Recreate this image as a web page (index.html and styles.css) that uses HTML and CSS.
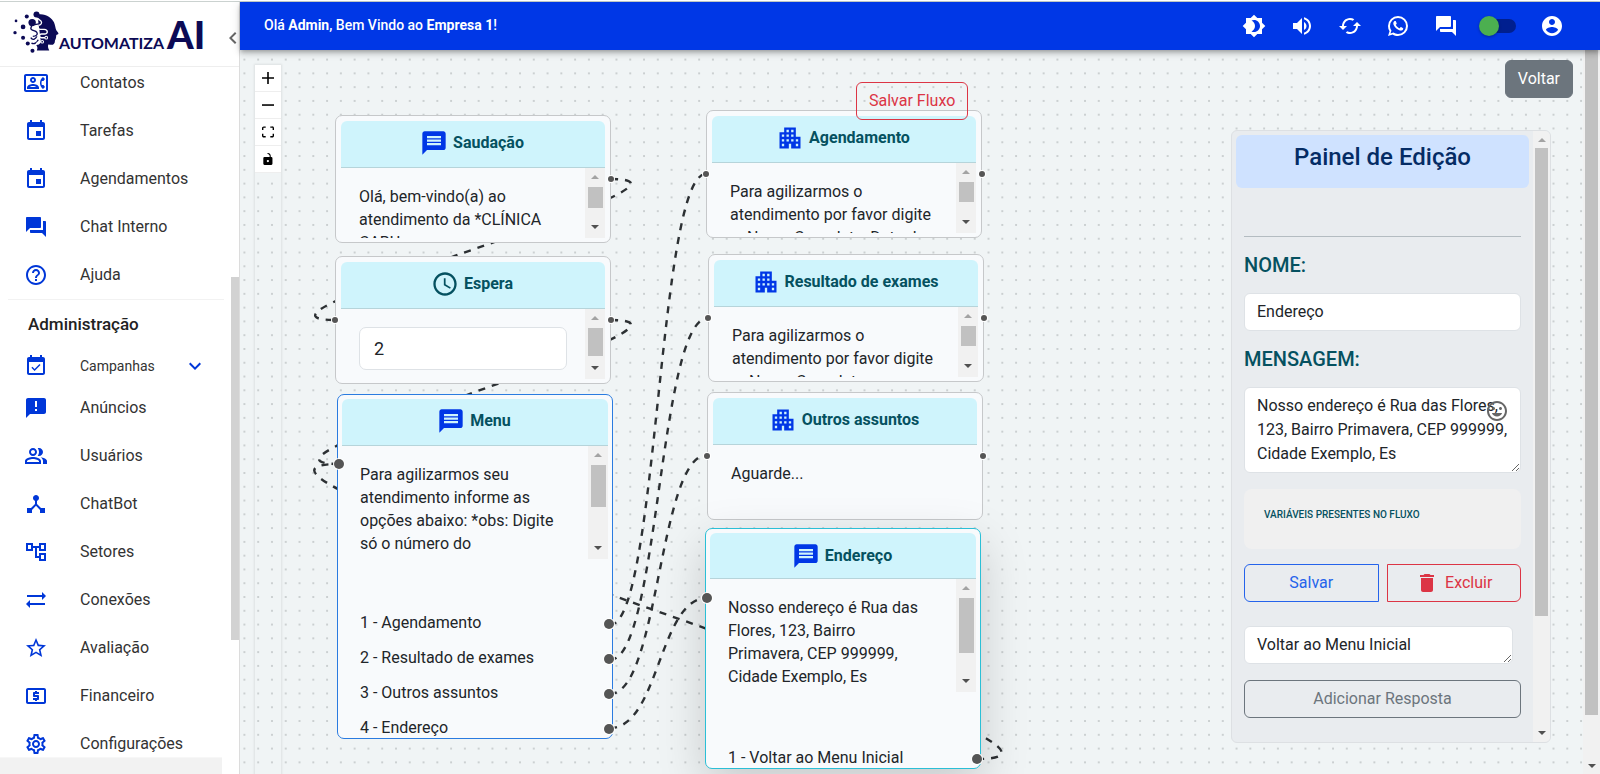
FILE: index.html
```html
<!DOCTYPE html>
<html lang="pt-BR">
<head>
<meta charset="utf-8">
<title>Automatiza AI</title>
<meta name="viewport" content="width=device-width, initial-scale=1">
<link rel="stylesheet" href="styles.css">
</head>
<body>
<svg class="sprite" aria-hidden="true">
  <symbol id="contact" viewBox="0 0 24 24"><path d="M22 3H2C.9 3 0 3.9 0 5v14c0 1.1.9 2 2 2h20c1.1 0 1.99-.9 1.99-2L24 5c0-1.1-.9-2-2-2zm0 16H2V5h20v14zm-2.99-1.01L21 16l-1.51-2h-1.64c-.22-.63-.35-1.3-.35-2s.13-1.37.35-2h1.64L21 8l-1.99-1.99c-1.31.98-2.28 2.38-2.73 3.99-.18.64-.28 1.31-.28 2s.1 1.36.28 2c.45 1.61 1.42 3.01 2.73 3.99zM9 12c1.65 0 3-1.35 3-3s-1.35-3-3-3-3 1.35-3 3 1.35 3 3 3zm0-4c.55 0 1 .45 1 1s-.45 1-1 1-1-.45-1-1 .45-1 1-1zm6 8.59c0-2.5-3.97-3.58-6-3.58s-6 1.08-6 3.58V18h12v-1.41zM5.48 16c.74-.5 2.22-1 3.52-1s2.77.49 3.52 1H5.48z"/></symbol>
  <symbol id="event" viewBox="0 0 24 24"><path d="M17 12h-5v5h5v-5zM16 1v2H8V1H6v2H5c-1.11 0-1.99.9-1.99 2L3 19c0 1.1.89 2 2 2h14c1.1 0 2-.9 2-2V5c0-1.1-.9-2-2-2h-1V1h-2zm3 18H5V8h14v11z"/></symbol>
  <symbol id="forum" viewBox="0 0 24 24"><path d="M21 6h-2v9H6v2c0 .55.45 1 1 1h11l4 4V7c0-.55-.45-1-1-1zm-4 6V3c0-.55-.45-1-1-1H3c-.55 0-1 .45-1 1v14l4-4h10c.55 0 1-.45 1-1z"/></symbol>
  <symbol id="help" viewBox="0 0 24 24"><path d="M11 18h2v-2h-2v2zm1-16C6.48 2 2 6.48 2 12s4.48 10 10 10 10-4.48 10-10S17.52 2 12 2zm0 18c-4.41 0-8-3.59-8-8s3.59-8 8-8 8 3.59 8 8-3.59 8-8 8zm0-14c-2.21 0-4 1.79-4 4h2c0-1.1.9-2 2-2s2 .9 2 2c0 2-3 1.75-3 5h2c0-2.25 3-2.5 3-5 0-2.21-1.79-4-4-4z"/></symbol>
  <symbol id="event-ok" viewBox="0 0 24 24"><path d="M16.53 11.06L15.47 10l-4.88 4.88-2.12-2.12-1.06 1.06L10.59 17l5.94-5.94zM19 3h-1V1h-2v2H8V1H6v2H5c-1.11 0-1.99.9-1.99 2L3 19c0 1.1.89 2 2 2h14c1.1 0 2-.9 2-2V5c0-1.1-.9-2-2-2zm0 16H5V8h14v11z"/></symbol>
  <symbol id="announce" viewBox="0 0 24 24"><path d="M20 2H4c-1.1 0-1.99.9-1.99 2L2 22l4-4h14c1.1 0 2-.9 2-2V4c0-1.1-.9-2-2-2zm-7 9h-2V5h2v6zm0 4h-2v-2h2v2z"/></symbol>
  <symbol id="people" viewBox="0 0 24 24"><path d="M16.67 13.13C18.04 14.06 19 15.32 19 17v3h4v-3c0-2.18-3.57-3.47-6.33-3.87zM15 12c2.21 0 4-1.79 4-4s-1.79-4-4-4c-.47 0-.91.1-1.33.24C14.5 5.27 15 6.58 15 8s-.5 2.73-1.33 3.76c.42.14.86.24 1.33.24zM9 12c2.21 0 4-1.79 4-4s-1.79-4-4-4-4 1.79-4 4 1.79 4 4 4zm0-6c1.1 0 2 .9 2 2s-.9 2-2 2-2-.9-2-2 .9-2 2-2zM9 13c-2.67 0-8 1.34-8 4v3h16v-3c0-2.66-5.33-4-8-4zm6 5H3v-.99C3.2 16.29 6.3 15 9 15s5.8 1.29 6 2v1z"/></symbol>
  <symbol id="hub" viewBox="0 0 24 24"><path d="M17 16l-4-4V8.82C14.16 8.4 15 7.3 15 6c0-1.66-1.34-3-3-3S9 4.34 9 6c0 1.3.84 2.4 2 2.82V12l-4 4H3v5h5v-3.05l4-4.2 4 4.2V21h5v-5h-4z"/></symbol>
  <symbol id="tree" viewBox="0 0 24 24"><path d="M22 11V3h-7v3H9V3H2v8h7V8h2v10h4v3h7v-8h-7v3h-2V8h2v3h7zM7 9H4V5h3v4zm10 6h3v4h-3v-4zm0-10h3v4h-3V5z"/></symbol>
  <symbol id="sync" viewBox="0 0 24 24"><path d="M22 8l-4-4v3H3v2h15v3l4-4zM2 16l4 4v-3h15v-2H6v-3l-4 4z"/></symbol>
  <symbol id="star" viewBox="0 0 24 24"><path d="M22 9.24l-7.19-.62L12 2 9.19 8.63 2 9.24l5.46 4.73L5.82 21 12 17.27 18.18 21l-1.63-7.03L22 9.24zM12 15.4l-3.76 2.27 1-4.28-3.32-2.88 4.38-.38L12 6.1l1.71 4.04 4.38.38-3.32 2.88 1 4.28L12 15.4z"/></symbol>
  <symbol id="atm" viewBox="0 0 24 24"><path d="M11 17h2v-1h1c.55 0 1-.45 1-1v-3c0-.55-.45-1-1-1h-3v-1h4V8h-2V7h-2v1h-1c-.55 0-1 .45-1 1v3c0 .55.45 1 1 1h3v1H9v2h2v1zm9-13H4c-1.11 0-1.99.89-1.99 2L2 18c0 1.11.89 2 2 2h16c1.11 0 2-.89 2-2V6c0-1.11-.89-2-2-2zm0 14H4V6h16v12z"/></symbol>
  <symbol id="settings" viewBox="0 0 24 24"><path d="M19.43 12.98c.04-.32.07-.64.07-.98 0-.34-.03-.66-.07-.98l2.11-1.65c.19-.15.24-.42.12-.64l-2-3.46c-.09-.16-.26-.25-.44-.25-.06 0-.12.01-.17.03l-2.49 1c-.52-.4-1.08-.73-1.69-.98l-.38-2.65C14.46 2.18 14.25 2 14 2h-4c-.25 0-.46.18-.49.42l-.38 2.65c-.61.25-1.17.59-1.69.98l-2.49-1c-.06-.02-.12-.03-.18-.03-.17 0-.34.09-.43.25l-2 3.46c-.13.22-.07.49.12.64l2.11 1.65c-.04.32-.07.65-.07.98 0 .33.03.66.07.98l-2.11 1.65c-.19.15-.24.42-.12.64l2 3.46c.09.16.26.25.44.25.06 0 .12-.01.17-.03l2.49-1c.52.4 1.08.73 1.69.98l.38 2.65c.03.24.24.42.49.42h4c.25 0 .46-.18.49-.42l.38-2.65c.61-.25 1.17-.59 1.69-.98l2.49 1c.06.02.12.03.18.03.17 0 .34-.09.43-.25l2-3.46c.12-.22.07-.49-.12-.64l-2.11-1.65zm-1.98-1.71c.04.31.05.52.05.73 0 .21-.02.43-.05.73l-.14 1.13.89.7 1.08.84-.7 1.21-1.27-.51-1.04-.42-.9.68c-.43.32-.84.56-1.25.73l-1.06.43-.16 1.13-.2 1.35h-1.4l-.19-1.35-.16-1.13-1.06-.43c-.43-.18-.83-.41-1.23-.71l-.91-.7-1.06.43-1.27.51-.7-1.21 1.08-.84.89-.7-.14-1.13c-.03-.31-.05-.54-.05-.74s.02-.43.05-.73l.14-1.13-.89-.7-1.08-.84.7-1.21 1.27.51 1.04.42.9-.68c.43-.32.84-.56 1.25-.73l1.06-.43.16-1.13.2-1.35h1.39l.19 1.35.16 1.13 1.06.43c.43.18.83.41 1.23.71l.91.7 1.06-.43 1.27-.51.7 1.21-1.07.85-.89.7.14 1.13zM12 8c-2.21 0-4 1.79-4 4s1.79 4 4 4 4-1.79 4-4-1.79-4-4-4zm0 6c-1.1 0-2-.9-2-2s.9-2 2-2 2 .9 2 2-.9 2-2 2z"/></symbol>
  <symbol id="bright" viewBox="0 0 24 24"><path d="M20 8.69V4h-4.69L12 .69 8.69 4H4v4.69L.69 12 4 15.31V20h4.69L12 23.31 15.31 20H20v-4.69L23.31 12 20 8.69zM12 18c-.89 0-1.74-.2-2.5-.55C11.56 16.5 13 14.42 13 12s-1.44-4.5-3.5-5.45C10.26 6.2 11.11 6 12 6c3.31 0 6 2.69 6 6s-2.69 6-6 6z"/></symbol>
  <symbol id="volume" viewBox="0 0 24 24"><path d="M3 9v6h4l5 5V4L7 9H3zm13.5 3c0-1.77-1.02-3.29-2.5-4.03v8.05c1.48-.73 2.5-2.25 2.5-4.02zM14 3.23v2.06c2.89.86 5 3.54 5 6.71s-2.11 5.85-5 6.71v2.06c4.01-.91 7-4.49 7-8.77s-2.99-7.86-7-8.77z"/></symbol>
  <symbol id="cached" viewBox="0 0 24 24"><path d="M19 8l-4 4h3c0 3.31-2.69 6-6 6-1.01 0-1.97-.25-2.8-.7l-1.46 1.46C8.97 19.54 10.43 20 12 20c4.42 0 8-3.58 8-8h3l-4-4zM6 12c0-3.31 2.69-6 6-6 1.01 0 1.97.25 2.8.7l1.46-1.46C15.03 4.46 13.57 4 12 4c-4.42 0-8 3.58-8 8H1l4 4 4-4H6z"/></symbol>
  <symbol id="whats" viewBox="0 0 24 24"><path d="M16.75 13.96c.25.13.41.2.46.3.06.11.04.61-.21 1.18-.2.56-1.24 1.1-1.7 1.12-.46.02-.47.36-2.96-.73-2.49-1.09-3.99-3.75-4.11-3.92-.12-.17-.96-1.38-.92-2.61.05-1.22.69-1.8.95-2.04.24-.26.51-.29.68-.26h.47c.15 0 .36-.06.55.45l.69 1.87c.06.13.1.28.01.44l-.27.41-.39.42c-.12.12-.26.25-.12.5.12.26.62 1.09 1.32 1.78.91.88 1.71 1.17 1.95 1.3.24.14.39.12.54-.04l.81-.94c.19-.25.35-.19.58-.11l1.67.88M12 2a10 10 0 0 1 10 10 10 10 0 0 1-10 10c-1.97 0-3.8-.57-5.35-1.55L2 22l1.55-4.65A9.969 9.969 0 0 1 2 12 10 10 0 0 1 12 2m0 2a8 8 0 0 0-8 8c0 1.72.54 3.31 1.46 4.61L4.5 19.5l2.89-.96A7.95 7.95 0 0 0 12 20a8 8 0 0 0 8-8 8 8 0 0 0-8-8z"/></symbol>
  <symbol id="account" viewBox="0 0 24 24"><path d="M12 2C6.48 2 2 6.48 2 12s4.48 10 10 10 10-4.48 10-10S17.52 2 12 2zm0 3c1.66 0 3 1.34 3 3s-1.34 3-3 3-3-1.34-3-3 1.34-3 3-3zm0 14.2c-2.5 0-4.71-1.28-6-3.22.03-1.99 4-3.08 6-3.08 1.99 0 5.97 1.09 6 3.08-1.29 1.94-3.5 3.22-6 3.22z"/></symbol>
  <symbol id="message" viewBox="0 0 24 24"><path d="M20 2H4c-1.1 0-1.99.9-1.99 2L2 22l4-4h14c1.1 0 2-.9 2-2V4c0-1.1-.9-2-2-2zm-2 12H6v-2h12v2zm0-3H6V9h12v2zm0-3H6V6h12v2z"/></symbol>
  <symbol id="clock" viewBox="0 0 24 24"><path d="M11.99 2C6.47 2 2 6.48 2 12s4.47 10 9.99 10C17.52 22 22 17.52 22 12S17.52 2 11.99 2zM12 20c-4.42 0-8-3.58-8-8s3.58-8 8-8 8 3.58 8 8-3.58 8-8 8zM12.5 7H11v6l5.25 3.15.75-1.23-4.5-2.67z"/></symbol>
  <symbol id="building" viewBox="0 0 24 24"><path d="M17 11V3H7v4H3v14h8v-4h2v4h8V11h-4zM7 19H5v-2h2v2zm0-4H5v-2h2v2zm0-4H5V9h2v2zm4 4H9v-2h2v2zm0-4H9V9h2v2zm0-4H9V5h2v2zm4 8h-2v-2h2v2zm0-4h-2V9h2v2zm0-4h-2V5h2v2zm4 12h-2v-2h2v2zm0-4h-2v-2h2v2z"/></symbol>
  <symbol id="trash" viewBox="0 0 24 24"><path d="M6 19c0 1.1.9 2 2 2h8c1.1 0 2-.9 2-2V7H6v12zM19 4h-3.5l-1-1h-5l-1 1H5v2h14V4z"/></symbol>
  <symbol id="mood" viewBox="0 0 24 24"><path d="M11.99 2C6.47 2 2 6.48 2 12s4.47 10 9.99 10C17.52 22 22 17.52 22 12S17.52 2 11.99 2zM12 20c-4.42 0-8-3.58-8-8s3.58-8 8-8 8 3.58 8 8-3.58 8-8 8zm3.5-9c.83 0 1.5-.67 1.5-1.5S16.33 8 15.5 8 14 8.67 14 9.5s.67 1.5 1.5 1.5zm-7 0c.83 0 1.5-.67 1.5-1.5S9.33 8 8.5 8 7 8.67 7 9.5 7.67 11 8.5 11zm3.5 6.5c2.33 0 4.31-1.46 5.11-3.5H6.89c.8 2.04 2.78 3.5 5.11 3.5z"/></symbol>
  <symbol id="more" viewBox="0 0 24 24"><path d="M16.59 8.59L12 13.17 7.41 8.59 6 10l6 6 6-6z"/></symbol>
  <symbol id="left" viewBox="0 0 24 24"><path d="M15.41 7.41L14 6l-6 6 6 6 1.41-1.41L10.83 12z"/></symbol>
  <symbol id="plus" viewBox="0 0 32 32"><path d="M32 18.133H18.133V32h-4.266V18.133H0v-4.266h13.867V0h4.266v13.867H32z"/></symbol>
  <symbol id="minus" viewBox="0 0 32 32"><path d="M0 14h32v4.2H0z"/></symbol>
  <symbol id="fit" viewBox="0 0 32 30"><path d="M3.692 4.63c0-.53.4-.938.939-.938h5.215V0H4.708C2.13 0 0 2.054 0 4.63v5.216h3.692V4.631zM27.354 0h-5.2v3.692h5.17c.53 0 .984.4.984.939v5.215H32V4.631A4.624 4.624 0 0027.354 0zm.954 24.83c0 .532-.4.94-.939.94h-5.215v3.768h5.215c2.577 0 4.631-2.13 4.631-4.707v-5.139h-3.692v5.139zm-23.677.94c-.531 0-.939-.4-.939-.94v-5.138H0v5.139c0 2.577 2.13 4.707 4.708 4.707h5.138V25.77H4.631z"/></symbol>
  <symbol id="unlock" viewBox="0 0 25 32"><path d="M21.333 10.667H19.81V7.619C19.81 3.429 16.38 0 12.19 0c-4.114 1.828-1.37 2.133.305 2.438 1.676.305 4.42 2.59 4.42 5.181v3.048H3.047A3.056 3.056 0 000 13.714v15.238A3.056 3.056 0 003.048 32h18.285a3.056 3.056 0 003.048-3.048V13.714a3.056 3.056 0 00-3.048-3.047zM12.19 24.533a3.056 3.056 0 01-3.047-3.047 3.056 3.056 0 013.047-3.048 3.056 3.056 0 013.048 3.048 3.056 3.056 0 01-3.048 3.047z"/></symbol>
</svg>

<div class="app">
  <aside class="sidebar">
    <div class="brand">
      <svg class="brand-mark" viewBox="38 30 140 130" aria-hidden="true">
        <g class="ink">
          <path d="M118 42c22-2 38 10 45 24 4 9 4 17 7 24l6 8c1 3-1 4-6 6l-1 8-1 4-2 4c0 10-5 14-13 13l-7-1c-2 6 0 12 3 18h-37c3-7 2-12-3-17 8 1 13-2 15-9l-8-62z"/>
          <circle cx="50" cy="62" r="4"/><circle cx="47" cy="97" r="5"/><circle cx="82" cy="49" r="6"/><circle cx="111" cy="43" r="9"/><circle cx="71" cy="80" r="7"/><circle cx="98" cy="67" r="11"/><circle cx="71" cy="112" r="6"/><circle cx="85" cy="129" r="6"/><circle cx="99" cy="151" r="6"/>
        </g>
        <g class="wire">
          <path d="M112 48l12 10c6 6 2 12-6 13l-12 2M98 72l-4 12c0 8 14 6 18 12s-2 12-12 12M94 112c6 10 16 2 18-4M116 118c-4 10-12 14-20 10"/>
        </g>
        <g class="trace">
          <path d="M114 54l10 8c5 6 0 12-6 13M104 80c8 0 10 7 18 7h12c12 1 12 14 1 14h-9c-8 0-8 11 0 11h12M126 124c-8-2-14 2-16 10"/>
        </g>
        <g class="hole"><circle cx="140" cy="112" r="4"/><circle cx="128" cy="124" r="4"/></g>
      </svg>
      <span class="brand-name">AUTOMATIZA</span><span class="brand-ai">AI</span>
      <button class="collapse" aria-label="Recolher menu"><svg><use href="#left"/></svg></button>
    </div>
    <div class="side-scroll">
      <nav class="menu">
        <a href="#contatos"><svg><use href="#contact"/></svg>Contatos</a>
        <a href="#tarefas"><svg><use href="#event"/></svg>Tarefas</a>
        <a href="#agendamentos"><svg><use href="#event"/></svg>Agendamentos</a>
        <a href="#chat"><svg><use href="#forum"/></svg>Chat Interno</a>
        <a href="#ajuda"><svg><use href="#help"/></svg>Ajuda</a>
        <hr>
        <h2>Administração</h2>
        <a class="group" href="#campanhas"><svg><use href="#event-ok"/></svg>Campanhas<svg class="chev"><use href="#more"/></svg></a>
        <a href="#anuncios"><svg><use href="#announce"/></svg>Anúncios</a>
        <a href="#usuarios"><svg><use href="#people"/></svg>Usuários</a>
        <a href="#chatbot"><svg><use href="#hub"/></svg>ChatBot</a>
        <a href="#setores"><svg><use href="#tree"/></svg>Setores</a>
        <a href="#conexoes"><svg><use href="#sync"/></svg>Conexões</a>
        <a href="#avaliacao"><svg><use href="#star"/></svg>Avaliação</a>
        <a href="#financeiro"><svg><use href="#atm"/></svg>Financeiro</a>
        <a href="#configuracoes"><svg><use href="#settings"/></svg>Configurações</a>
      </nav>
      <div class="side-thumb"></div>
    </div>
    <div class="side-foot"></div>
  </aside>

  <div class="main">
    <header class="topbar">
      <p>Olá <b>Admin</b>, Bem Vindo ao <b>Empresa 1</b>!</p>
      <div class="tools">
        <button aria-label="Tema"><svg><use href="#bright"/></svg></button>
        <button aria-label="Volume"><svg><use href="#volume"/></svg></button>
        <button aria-label="Atualizar"><svg><use href="#cached"/></svg></button>
        <button aria-label="WhatsApp"><svg><use href="#whats"/></svg></button>
        <button aria-label="Chat"><svg><use href="#forum"/></svg></button>
        <input class="switch" type="checkbox" aria-label="Disponível">
        <button aria-label="Conta"><svg><use href="#account"/></svg></button>
      </div>
    </header>

    <div class="work">
      <main class="canvas">
        <svg class="edges" aria-hidden="true">
          <defs><pattern id="dots" x="3.4" y="8.6" width="13.78" height="13.78" patternUnits="userSpaceOnUse"><circle cx="1" cy="1" r="0.8"/></pattern></defs>
          <rect width="100%" height="100%" fill="url(#dots)"/>
          <g transform="translate(-240 -50)">
            <path d="M611 179C738 179 208 320 335 320"/>
            <path d="M611 320C738 320 212 464 339 464"/>
            <path d="M610 625C658 625 658 174 706 174"/>
            <path d="M610 660C659 660 659 318 708 318"/>
            <path d="M610 694C659 694 659 455 707 455"/>
            <path d="M610 728C659 728 659 598 707 598"/>
            <path d="M977 759C1172 759 144 464 339 464"/>
          </g>
        </svg>

        <div class="controls">
          <button aria-label="Aproximar"><svg><use href="#plus"/></svg></button>
          <button aria-label="Afastar"><svg><use href="#minus"/></svg></button>
          <button aria-label="Ajustar"><svg><use href="#fit"/></svg></button>
          <button aria-label="Bloquear"><svg><use href="#unlock"/></svg></button>
        </div>

        <article class="node" style="left:95px;top:65px">
          <h3><svg><use href="#message"/></svg>Saudação</h3>
          <div class="view"><p>Olá, bem-vindo(a) ao<br>atendimento da *CLÍNICA<br>CABU</p><div class="bar"><i class="t21"></i></div></div>
          <span class="dot right"></span>
        </article>
        <article class="node" style="left:95px;top:206px">
          <h3><svg class="teal"><use href="#clock"/></svg>Espera</h3>
          <div class="view"><p class="field"><input class="wait" value="2" aria-label="Espera"></p><div class="bar"><i class="t28"></i></div></div>
          <span class="dot left"></span><span class="dot right"></span>
        </article>
        <article class="node big primary" style="left:97px;top:344px">
          <h3><svg><use href="#message"/></svg>Menu</h3>
          <div class="view"><p>Para agilizarmos seu<br>atendimento informe as<br>opções abaixo: *obs: Digite<br>só o número do</p><div class="bar"><i class="t42"></i></div></div>
          <ol><li>1 - Agendamento</li><li>2 - Resultado de exames</li><li>3 - Outros assuntos</li><li>4 - Endereço</li></ol>
          <span class="dot left"></span>
        </article>
        <article class="node" style="left:466px;top:60px">
          <h3><svg><use href="#building"/></svg>Agendamento</h3>
          <div class="view"><p>Para agilizarmos o<br>atendimento por favor digite<br>o &nbsp;Nome Completo, Data de</p><div class="bar"><i class="t20"></i></div></div>
          <span class="dot left"></span><span class="dot right"></span>
        </article>
        <article class="node" style="left:468px;top:204px">
          <h3><svg><use href="#building"/></svg>Resultado de exames</h3>
          <div class="view"><p>Para agilizarmos o<br>atendimento por favor digite<br>o &nbsp;Nome Completo</p><div class="bar"><i class="t20"></i></div></div>
          <span class="dot left"></span><span class="dot right"></span>
        </article>
        <article class="node" style="left:467px;top:342px">
          <h3><svg><use href="#building"/></svg>Outros assuntos</h3>
          <div class="view"><p>Aguarde...</p></div>
          <span class="dot left"></span><span class="dot right"></span>
        </article>
        <article class="node big info" style="left:465px;top:478px">
          <h3><svg><use href="#message"/></svg>Endereço</h3>
          <div class="view"><p>Nosso endereço é Rua das<br>Flores, 123, Bairro<br>Primavera, CEP 999999,<br>Cidade Exemplo, Es</p><div class="bar"><i class="t55"></i></div></div>
          <ol><li>1 - Voltar ao Menu Inicial</li></ol>
          <span class="dot left"></span>
        </article>

        <button class="btn outline-danger save-flow">Salvar Fluxo</button>
        <button class="btn back">Voltar</button>

        <section class="panel">
          <form class="panel-body">
            <h1>Painel de Edição</h1>
            <div class="fields">
              <label class="caption" for="nome">NOME:</label>
              <input id="nome" class="control" value="Endereço">
              <label class="caption" for="msg">MENSAGEM:</label>
              <div class="message">
                <textarea id="msg" class="control" rows="3">Nosso endereço é Rua das Flores, 123, Bairro Primavera, CEP 999999, Cidade Exemplo, Es</textarea>
                <button type="button" class="emoji" aria-label="Emoji"><svg><use href="#mood"/></svg></button>
              </div>
              <div class="vars">VARIÁVEIS PRESENTES NO FLUXO</div>
              <div class="pair">
                <button type="button" class="btn outline-primary">Salvar</button>
                <button type="button" class="btn outline-danger"><svg><use href="#trash"/></svg>Excluir</button>
              </div>
              <textarea class="control answer" rows="1" aria-label="Resposta">Voltar ao Menu Inicial</textarea>
              <button type="button" class="btn outline-secondary">Adicionar Resposta</button>
            </div>
          </form>
          <div class="vbar"><i></i></div>
        </section>
      </main>
      <div class="page-bar"><i></i></div>
    </div>
  </div>
</div>
</body>
</html>
```
FILE: styles.css
```css
* { box-sizing: border-box; }

body {
  margin: 0;
  font-family: Roboto, "Liberation Sans", sans-serif;
  font-size: 16px;
  line-height: 24px;
  color: #212529;
  background: #fff;
}

button, input, textarea { font: inherit; color: inherit; margin: 0; }
button { background: none; border: 0; padding: 0; cursor: pointer; }
h1, h2, h3, p, ol { margin: 0; padding: 0; }
svg { fill: currentColor; flex: none; width: 24px; height: 24px; display: block; }
.sprite { position: absolute; width: 0; height: 0; }

.app { display: flex; height: 100vh; border-top: 1px solid #fff; padding-top: 1px; overflow: hidden; box-shadow: inset 0 1px #cbd2d0; }

/* Sidebar */
.sidebar {
  flex: 0 0 240px;
  display: flex;
  flex-direction: column;
  background: #fff;
  border-right: 1px solid #dcdcdc;
}
.brand {
  flex: none;
  display: flex;
  align-items: baseline;
  height: 65px;
  padding: 8px 0 0 12px;
  border-bottom: 1px solid #eee;
  color: #0c0a55;
  font-family: Lato, sans-serif;
  line-height: 48px;
}
.brand-mark { width: 47px; height: 44px; align-self: flex-start; }
.brand-mark .ink { fill: #0c0a55; }
.brand-mark .wire { fill: none; stroke: #0c0a55; stroke-width: 4; }
.brand-mark .trace { fill: none; stroke: #fff; stroke-width: 4; }
.brand-mark .hole { fill: #0c0a55; stroke: #fff; stroke-width: 3; }
.brand-name { font-size: 16px; font-weight: 700; }
.brand-ai { font-size: 38px; font-weight: 900; margin-left: 3px; }
.collapse { margin-left: auto; align-self: center; color: #666; width: 14px; }
.collapse svg { margin-left: -4px; }

.side-scroll { flex: 1; min-height: 0; display: flex; overflow: hidden; }
.menu { flex: 1; margin-top: -8px; color: #0037e6; }
.menu a {
  display: flex;
  align-items: center;
  gap: 32px;
  height: 48px;
  padding-left: 24px;
  text-decoration: none;
  color: #333;
}
.menu a svg { color: #0037d8; }
.menu hr { height: 1px; margin: 0 7px 0 8px; border: 0; background: #f2f2f2; }
.menu h2 { font-size: 17px; font-weight: 500; line-height: 48px; padding-left: 28px; color: #222; }
.menu .group { height: 36px; font-size: 14px; }
.menu .group .chev { margin-left: -4px; }
.side-thumb { width: 8px; height: 363px; margin-top: 210px; background: #d2d2d2; }
.side-foot { flex: none; height: 17px; margin-right: 17px; background: #f2f2f2; border-top: 1px solid #f7f7f7; }

/* Top bar */
.main { flex: 1; min-width: 0; display: flex; flex-direction: column; }
.topbar {
  position: relative;
  z-index: 5;
  flex: none;
  display: flex;
  align-items: center;
  justify-content: space-between;
  height: 48px;
  padding: 0 36px 2px 24px;
  color: #fff;
  background: #0037e6;
  box-shadow: 0 2px 4px -1px rgba(0,0,0,.2), 0 4px 5px rgba(0,0,0,.14), 0 1px 10px rgba(0,0,0,.12);
}
.topbar p { font-size: 14px; font-weight: 500; }
.topbar b { font-weight: 700; }
.tools { display: flex; align-items: center; gap: 24px; padding-top: 2px; }
.switch {
  appearance: none;
  display: flex;
  align-items: center;
  width: 34px;
  height: 14px;
  border-radius: 7px;
  background: #001f8f;
}
.switch::before { content: ""; width: 20px; height: 20px; margin-left: -3px; border-radius: 50%; background: #4caf50; flex: none; box-shadow: 0 1px 3px rgba(0,0,0,.3); }

/* Flow canvas */
.work { flex: 1; min-height: 0; display: flex; }
.canvas { position: relative; flex: 1; min-width: 0; overflow: hidden; background: #f0f4f5; }
.edges { position: absolute; inset: 0; width: 100%; height: 100%; fill: #999ea0; }
.edges g path { fill: none; stroke: #2c3033; stroke-width: 2.4; stroke-dasharray: 7; }
.page-bar { flex: 0 0 17px; display: flex; flex-direction: column; align-items: center; justify-content: space-between; background: #f1f1f1; padding-bottom: 6px; }
.page-bar i { width: 13px; height: calc(100% - 53px); background: #c1c1c1; }
.page-bar::after, .vbar::before, .vbar::after, .bar::before, .bar::after {
  content: "";
  flex: none;
  border: 4px solid transparent;
  border-top-color: #505050;
  border-bottom-width: 0;
}

.controls { position: absolute; left: 15px; top: 15px; bottom: -8px; width: 26px; box-shadow: 0 0 2px 1px rgba(0,0,0,.08); }
.controls button { display: flex; align-items: center; justify-content: center; width: 26px; height: 27px; background: #fff; border-bottom: 1px solid #eee; color: #000; }
.controls svg { width: 12px; height: 12px; }

.node {
  position: absolute;
  width: 276px;
  height: 128px;
  padding: 5px;
  border: 1px solid #c6c8ca;
  border-radius: 7px;
  background: #f8fafc;
}
.node h3 {
  display: flex;
  align-items: center;
  justify-content: center;
  gap: 5px;
  height: 47px;
  padding: 0 2px 2px 0;
  font-size: 16px;
  font-weight: 700;
  color: #055160;
  background: #cff4fc;
  border-bottom: 1px solid #b6d4da;
  border-radius: 6px 6px 0 0;
}
.node h3 svg { width: 28px; height: 28px; color: #0037e6; }
.node h3 .teal { color: #055160; }
.view { display: flex; height: 70px; }
.view p { flex: 1; padding: 17px 0 0 18px; line-height: 23px; overflow: hidden; white-space: nowrap; }
.view .field { padding-top: 18px; }
.wait { width: 208px; height: 43px; padding: 0 14px; font-size: 18px; background: #fff; border: 1px solid #dee2e6; border-radius: 7px; }
.bar { flex: 0 0 20px; display: flex; flex-direction: column; align-items: center; padding: 7px 0 9px; background: #f1f1f1; }
.bar::before, .vbar::before { border-top-width: 0; border-bottom: 4px solid #a3a3a3; }
.bar i { width: 15px; margin: 8px 0 auto; background: #c1c1c1; }
.t20 { height: 20px; }
.t21 { height: 21px; }
.t28 { height: 28px; }
.t42 { height: 42px; }
.t55 { height: 55px; }

.big { padding: 4px; }
.big .view { height: 113px; }
.primary { height: 345px; border-color: #2a7be0; }
.info { height: 241px; border-color: #2bbfd6; box-shadow: 0 16px 48px rgba(0,0,0,.176); }
.info h3 { height: 46px; padding-bottom: 0; }
.node ol { list-style: none; display: grid; gap: 12px; margin-top: 52px; line-height: 23px; }
.info ol { margin-top: 54px; }
.node li { position: relative; padding-left: 18px; }
.dot, .node li::after {
  position: absolute;
  width: 6px;
  height: 6px;
  border-radius: 50%;
  background: #555;
  box-shadow: 0 0 0 1px #fff;
}
.dot { top: 60px; }
.dot.left { left: -4px; }
.dot.right { right: -4px; }
.big .dot, .node li::after { width: 10px; height: 10px; }
.big .dot { top: 64px; }
.node li::after { content: ""; right: -6px; top: 8px; }

/* Buttons */
.btn { display: flex; align-items: center; justify-content: center; gap: 6px; height: 38px; padding: 0 12px; border: 1px solid; border-radius: 6px; }
.outline-danger { color: #dc3545; }
.outline-primary { color: #2563eb; }
.outline-secondary { color: #6c757d; }
.save-flow { position: absolute; left: 616px; top: 32px; }
.back { position: absolute; right: 10px; top: 10px; color: #fff; background: #6c757d; border-color: #6c757d; }

/* Editing panel */
.panel { position: absolute; right: 32px; top: 80px; bottom: 31px; width: 320px; display: flex; background: #e9ecef; border: 1px solid #dde0e3; border-radius: 6px; overflow: hidden; }
.panel-body { flex: 1; min-width: 0; padding: 4px; }
.panel h1 { height: 53px; padding-top: 8px; font-size: 24px; font-weight: 500; line-height: 28px; text-align: center; color: #052c65; background: #cfe2ff; border-radius: 6px; }
.fields { display: flex; flex-direction: column; margin: 48px 8px 0; padding-top: 16px; border-top: 1px solid #b4bcc1; }
.caption { font-size: 20px; font-weight: 500; color: #055160; }
.control { display: block; width: 100%; padding: 6px 12px; background: #fff; border: 1px solid #dee2e6; border-radius: 6px; }
#nome { height: 38px; margin: 16px 0; padding: 5px 12px 7px; }
.message { position: relative; margin-top: 16px; }
.message .control { height: 86px; overflow: hidden; }
.emoji { position: absolute; right: 12px; top: 12px; color: #666; }
.vars { height: 60px; margin: 16px 0 15px; padding: 14px 20px; font-size: 10px; font-weight: 500; color: #055160; background: #f0f0f0; border-radius: 8px; }
.pair { display: grid; grid-template-columns: 1fr 1fr; gap: 8px; }
.pair .btn:first-child { border-radius: 6px 0 0 6px; }
.pair .btn:last-child { border-radius: 0 6px 6px 0; }
.answer { width: auto; height: 38px; margin: 24px 8px 16px 0; overflow: hidden; }
.vbar { flex: 0 0 17px; display: flex; flex-direction: column; align-items: center; padding: 7px 0; background: #f1f1f1; }
.vbar i { width: 13px; height: 468px; margin: 6px 0 auto; background: #c1c1c1; }
```
